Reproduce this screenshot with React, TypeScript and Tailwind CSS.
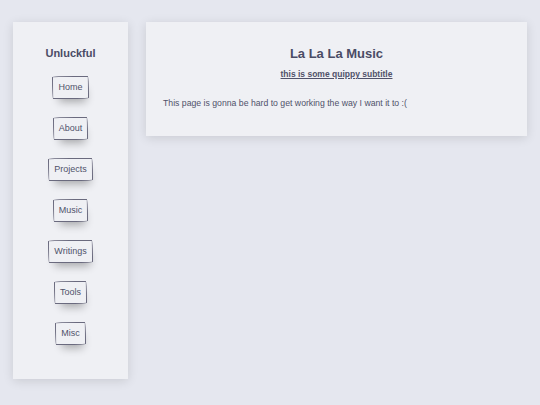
import React from "react"

const links = ["Home", "About", "Projects", "Music", "Writings", "Tools", "Misc"]

const sketchy =
  "rounded-[255px_15px_225px_15px/15px_225px_15px_255px] border border-[#6a6a7e] shadow-[2px_8px_8px_-5px_rgba(0,0,0,0.3)]"

export default function App() {
  return (
    <div
      className="min-h-[405px] w-full bg-[#e5e7ef] text-[#50526a]"
      style={{ fontFamily: '"Liberation Sans", Arial, sans-serif' }}
    >
      <div className="flex items-start gap-[18px] px-[13px] pt-[22px]">
        {/* Sidebar */}
        <aside className="flex h-[357px] w-[115px] shrink-0 flex-col items-center bg-[#eff0f4] pt-[24px] shadow-[0_2px_10px_rgba(0,0,0,0.12)]">
          <h1 className="text-[11px] font-bold leading-[14px] text-[#4a4c65]">Unluckful</h1>
          <nav className="mt-[16px] flex flex-col items-center gap-[18px]">
            {links.map((l) => (
              <button
                key={l}
                className={`h-[23px] bg-[#eff0f4] px-[5px] text-[9px] leading-none text-[#50526a] ${sketchy}`}
              >
                {l}
              </button>
            ))}
          </nav>
        </aside>

        {/* Main */}
        <main className="flex h-[114px] flex-1 flex-col bg-[#eff0f4] px-[17px] pt-[24px] shadow-[0_2px_10px_rgba(0,0,0,0.12)]">
          <h2 className="text-center text-[13px] font-bold leading-[16px] text-[#4a4c65]">La La La Music</h2>
          <h3 className="mt-[7px] text-center text-[8.5px] font-bold leading-[11px] underline">
            this is some quippy subtitle
          </h3>
          <p className="mt-[18px] text-[8.7px] leading-[11px]">
            This page is gonna be hard to get working the way I want it to :(
          </p>
        </main>
      </div>
    </div>
  )
}
